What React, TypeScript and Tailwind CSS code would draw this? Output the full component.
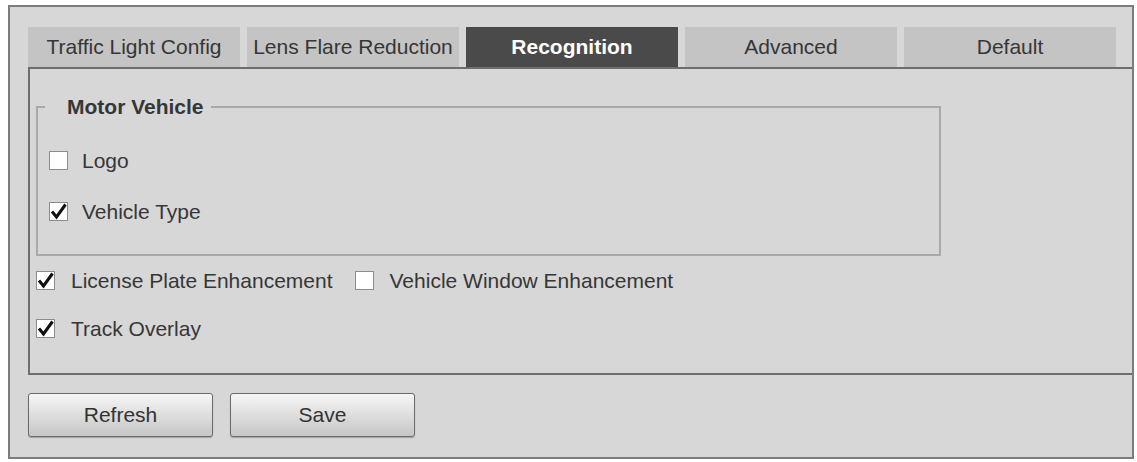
const tabs = [
  "Traffic Light Config",
  "Lens Flare Reduction",
  "Recognition",
  "Advanced",
  "Default",
];

function Box({ checked }: { checked: boolean }) {
  return (
    <span className="flex h-[19px] w-[19px] shrink-0 items-center justify-center border border-[#8c8c8c] bg-white">
      {checked && (
        <svg viewBox="0 0 19 19" className="h-[19px] w-[19px] overflow-visible">
          <path
            d="M3 9.5 L7.5 15 L16.5 2.5"
            fill="none"
            stroke="#111"
            strokeWidth="3"
          />
        </svg>
      )}
    </span>
  );
}

function Option({
  label,
  checked,
  gap = "gap-[16px]",
}: {
  label: string;
  checked: boolean;
  gap?: string;
}) {
  return (
    <label className={`flex h-[20px] items-center ${gap}`}>
      <Box checked={checked} />
      <span className="leading-none">{label}</span>
    </label>
  );
}

export default function App() {
  return (
    <div
      className="h-[462px] w-[1137px] bg-white pl-[8px] pr-[3px] pt-[5px] text-[21px] text-[#363636]"
      style={{ fontFamily: '"Liberation Sans", Arial, sans-serif' }}
    >
      <div className="h-[454px] border-2 border-[#7c7c7c] bg-[#d7d7d7] pl-[18px] pt-[20px]">
        <div className="flex h-[40px] gap-[7px]">
          {tabs.map((t) =>
            t === "Recognition" ? (
              <div
                key={t}
                className="flex w-[212px] items-center justify-center bg-[#4a4a4a] font-bold text-white"
              >
                {t}
              </div>
            ) : (
              <div
                key={t}
                className="flex w-[212px] items-center justify-center bg-[#c4c4c4]"
              >
                {t}
              </div>
            ),
          )}
        </div>

        <div className="h-[308px] border-y-2 border-l-2 border-[#6e6e6e] pl-[6px]">
          <fieldset className="mt-[26px] h-[161px] w-[905px] border-2 border-[#a9a9a9]">
            <legend className="ml-[7px] pl-[22px] pr-[7px] font-bold leading-[24px]">
              Motor Vehicle
            </legend>
            <div className="mt-[31px] flex flex-col gap-[31px] pl-[11px]">
              <Option label="Logo" checked={false} gap="gap-[14px]" />
              <Option label="Vehicle Type" checked gap="gap-[14px]" />
            </div>
          </fieldset>

          <div className="mt-[14px] flex flex-col gap-[28px]">
            <div className="flex gap-[22px]">
              <Option label="License Plate Enhancement" checked />
              <Option label="Vehicle Window Enhancement" checked={false} />
            </div>
            <Option label="Track Overlay" checked />
          </div>
        </div>

        <div className="mt-[18px] flex gap-[17px]">
          <button className="h-[44px] w-[185px] rounded-[3px] border border-[#6a6a6a] bg-gradient-to-b from-[#f6f6f6] to-[#c6c6c6] text-[#333] shadow-[0_1px_1px_rgba(0,0,0,0.25)]">
            Refresh
          </button>
          <button className="h-[44px] w-[185px] rounded-[3px] border border-[#6a6a6a] bg-gradient-to-b from-[#f6f6f6] to-[#c6c6c6] text-[#333] shadow-[0_1px_1px_rgba(0,0,0,0.25)]">
            Save
          </button>
        </div>
      </div>
    </div>
  );
}
